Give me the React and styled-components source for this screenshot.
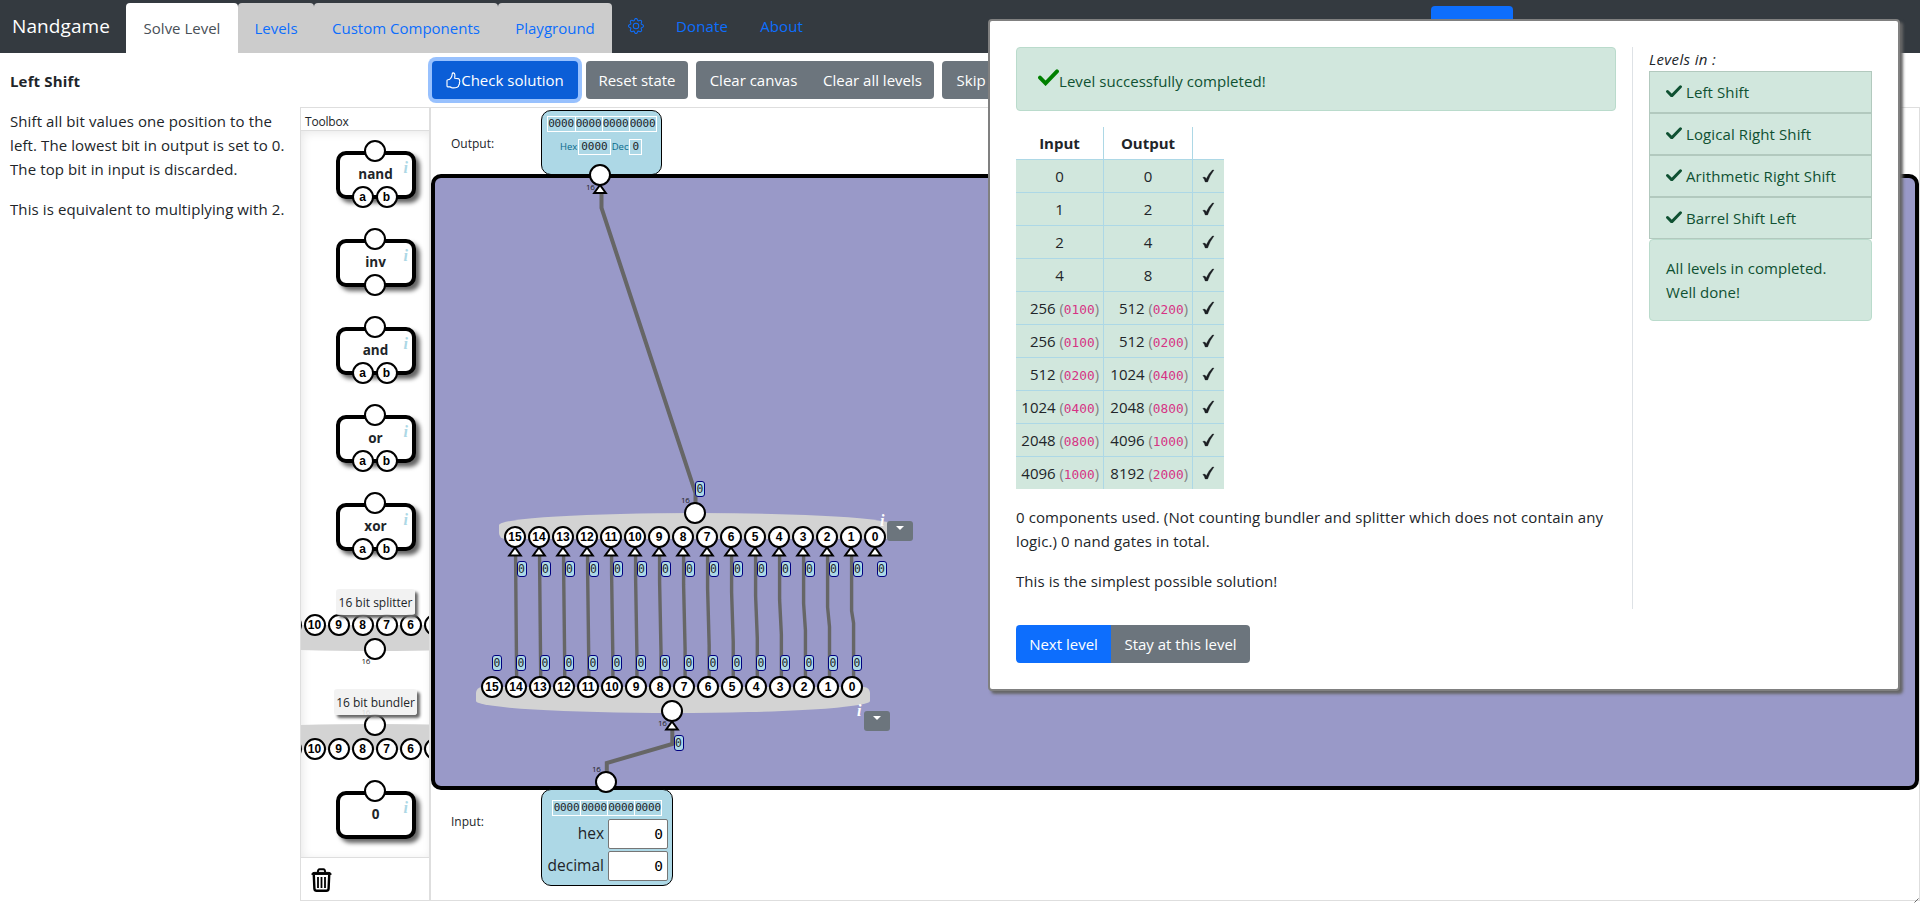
import React from "react";
import styled, { createGlobalStyle, css } from "styled-components";
import { BsGear } from "react-icons/bs";

const Global = createGlobalStyle`
  *, *::before, *::after { box-sizing: border-box; }
  body {
    margin: 0;
    background: #fff;
    color: #212529;
    font-family: "Open Sans", "Noto Sans", sans-serif;
    font-size: 15px;
    line-height: 24px;
    overflow: hidden;
  }
  p { margin: 0 0 16px; }
`;

const mono = css`font-family: "DejaVu Sans Mono", monospace;`;

const Page = styled.div`
  position: relative;
  display: flex;
  flex-direction: column;
  width: 1920px;
  height: 903px;
  overflow: hidden;
  white-space: nowrap;
`;

/* ---------- header ---------- */
const Header = styled.header`
  display: flex;
  align-items: flex-end;
  height: 53px;
  background: #343a40;
`;
const Brand = styled.div`
  width: 126px;
  height: 53px;
  padding-left: 12px;
  color: #fff;
  font-size: 19px;
  line-height: 52px;
  letter-spacing: 0.1px;
`;
const Tab = styled.a`
  width: ${(p) => p.$w}px;
  height: 50px;
  text-align: center;
  line-height: 51px;
  border-radius: 4px 4px 0 0;
  color: ${(p) => (p.$active ? "#495057" : "#0d6efd")};
  background: ${(p) => (p.$active ? "#fff" : "#ccc")};
`;
const NavLink = styled.a`
  display: flex;
  align-items: center;
  height: 53px;
  padding-bottom: 2px;
  margin-left: ${(p) => p.$gap}px;
  color: #0d6efd;
  letter-spacing: 0.15px;
  svg { display: block; }
`;
const HiddenNavButton = styled.span`
  width: 82px;
  height: 38px;
  margin: 0 407px 9px auto;
  border-radius: 4px;
  background: #0d6efd;
`;

/* ---------- body ---------- */
const Body = styled.main`
  display: flex;
  flex: 1;
`;
const Description = styled.section`
  width: 300px;
  padding: 16px 10px 0;
  letter-spacing: 0.1px;
  p, h1 { margin: 0 0 16px; }
`;
const Title = styled.h1`
  font-size: 15px;
  font-weight: 700;
  letter-spacing: 0.15px;
`;
const Work = styled.section`
  display: flex;
  flex-direction: column;
  width: 1620px;
`;
const Toolbar = styled.div`
  display: flex;
  gap: 8px;
  height: 54px;
  padding: 8px 0 0 132px;
`;
const Group = styled.div`
  display: flex;
`;
const Button = styled.button`
  display: flex;
  align-items: center;
  justify-content: center;
  width: ${(p) => p.$w}px;
  height: 38px;
  padding: 0;
  border: 0;
  border-radius: ${(p) => p.$r || "4px"};
  background: ${(p) => p.$bg || "#6c757d"};
  box-shadow: ${(p) => (p.$focus ? "0 0 0 4px rgba(49,132,253,.5)" : "none")};
  color: #fff;
  font: inherit;
`;
const Columns = styled.div`
  display: flex;
  height: 794px;
`;

/* ---------- toolbox ---------- */
const Toolbox = styled.aside`
  display: flex;
  flex-direction: column;
  width: 130px;
  border: 1px solid #dedede;
`;
const ToolboxHead = styled.div`
  height: 23px;
  padding: 2px 0 0 4px;
  border-bottom: 1px solid #dedede;
  font-size: 12px;
  line-height: 24px;
  letter-spacing: -0.2px;
`;
const ToolList = styled.div`
  display: flex;
  flex-direction: column;
  align-items: center;
  height: 726px;
  padding: 20px 0 0 21px;
  overflow: hidden;
  box-shadow: inset 2px 2px 10px #e9e9e9;
`;
const Trash = styled.div`
  height: 43px;
  padding: 10px 0 0 10px;
  border-top: 1px solid #dedede;
`;
const Gate = styled.div`
  position: relative;
  flex: none;
  width: 80px;
  height: 48px;
  margin-bottom: 40px;
  border: 4px solid #000;
  border-radius: 10px;
  background: #fff;
  box-shadow: 4px 4px 4px #666;
  text-align: center;
  font-size: 13.5px;
  font-weight: 700;
  line-height: 38px;
`;
const Info = styled.span`
  position: absolute;
  left: ${(p) => p.$x}px;
  top: ${(p) => p.$y}px;
  color: ${(p) => p.$c || "lightblue"};
  font: italic 700 16px/16px "Liberation Serif", serif;
`;
const Pin = styled.span`
  position: absolute;
  left: ${(p) => p.$x - 11}px;
  top: ${(p) => p.$y - 11}px;
  width: 22px;
  height: 22px;
  border: 2px solid #000;
  border-radius: 50%;
  background: #fff;
  color: #000;
  font: 700 12px/18px "Liberation Sans", sans-serif;
  text-align: center;
  display: flex;
  justify-content: center;
`;
const BusTool = styled.div`
  position: relative;
  flex: none;
  width: 0;
  height: ${(p) => p.$h}px;
`;
const BusLabel = styled.div`
  position: absolute;
  left: ${(p) => -p.$w / 2}px;
  top: ${(p) => p.$y}px;
  width: ${(p) => p.$w}px;
  height: 26px;
  border-radius: 3px;
  background: rgba(240, 240, 240, 0.88);
  box-shadow: 3px 3px 3px #666;
  font-size: 12px;
  line-height: 27px;
  text-align: center;
`;
const BusBody = styled.div`
  position: absolute;
  left: ${(p) => p.$x}px;
  top: ${(p) => p.$y}px;
  width: 394px;
  height: 26px;
  background: lightgray;
  border-radius: ${(p) => (p.$up ? "50% 50% 6px 6px / 12px 12px 6px 6px" : "6px 6px 50% 50% / 6px 6px 12px 12px")};
`;
const Width16 = styled.span`
  position: absolute;
  left: ${(p) => p.$x}px;
  top: ${(p) => p.$y}px;
  font-size: 8px;
  line-height: 10px;
  letter-spacing: -0.4px;
  color: #222;
`;

/* ---------- workspace ---------- */
const Panel = styled.div`
  position: relative;
  display: flex;
  flex-direction: column;
  width: 1490px;
  border: 1px solid #dedede;
`;
const Row = styled.div`
  display: flex;
  height: ${(p) => p.$h}px;
  padding-left: 20px;
`;
const RowLabel = styled.div`
  width: 90px;
  padding-top: ${(p) => p.$t}px;
  font-size: 12px;
`;
const Canvas = styled.div`
  height: 616px;
  border: 4px solid #000;
  border-radius: 10px;
  background: #9999c8;
`;
const Port = styled.div`
  display: flex;
  flex-direction: column;
  align-items: center;
  width: ${(p) => p.$w}px;
  height: ${(p) => p.$h}px;
  margin-top: ${(p) => p.$t}px;
  padding-top: ${(p) => p.$pt}px;
  border: 1px solid #000;
  border-radius: 10px;
  background: lightblue;
`;
const Bits = styled.div`
  display: flex;
  height: 16px;
  border: 1px solid #fff;
  span {
    display: flex;
    justify-content: center;
    width: 27px;
    ${mono}
    font-size: 11px;
    line-height: 14px;
    letter-spacing: -0.2px;
  }
  span + span { border-left: 1px solid #fff; }
`;
const Readout = styled.div`
  display: flex;
  align-items: center;
  height: 16px;
  margin-top: 7px;
  color: #0a6a8c;
  font-size: 9.5px;
  line-height: 16px;
  b {
    height: 16px;
    margin: 0 1px;
    padding: 0 2px;
    border: 1px solid #fff;
    color: #212529;
    ${mono}
    font-weight: 400;
    font-size: 11px;
    line-height: 14px;
  }
`;
const Field = styled.label`
  display: flex;
  align-items: center;
  justify-content: flex-end;
  align-self: stretch;
  height: 30px;
  margin: ${(p) => p.$t}px 4px 0 0;
  span { margin: -2px 4px 0 0; font-size: 15.5px; }
`;
const Input = styled.div`
  width: 60px;
  height: 30px;
  padding: 0 4px;
  border: 1px solid #767676;
  border-radius: 2px;
  background: #fff;
  color: #000;
  text-align: right;
  ${mono}
  font-size: 14.5px;
  line-height: 29px;
`;
const Circuit = styled.div`
  position: absolute;
  left: -431px;
  top: -108px;
  width: 1920px;
  height: 903px;
  > svg { position: absolute; left: 0; top: 0; }
`;
const Value = styled.span`
  position: absolute;
  left: ${(p) => p.$x - 5}px;
  top: ${(p) => p.$y - 8}px;
  display: flex;
  justify-content: center;
  width: 10px;
  height: 16px;
  border: 1px solid navy;
  border-radius: 3px;
  background: lightblue;
  ${mono}
  font-size: 11.4px;
  line-height: 14px;
`;
const Menu = styled.span`
  position: absolute;
  left: ${(p) => p.$x}px;
  top: ${(p) => p.$y}px;
  width: 26px;
  height: 20px;
  border-radius: 3px;
  background: #6c757d;
  &::after {
    content: "";
    display: block;
    width: 0;
    margin: 5px auto 0;
    border: 4px solid transparent;
    border-top-color: #fff;
    border-bottom: 0;
  }
`;
const Grip = styled.svg`
  position: absolute;
  right: 0;
  bottom: 0;
`;

/* ---------- dialog ---------- */
const Dialog = styled.div`
  position: absolute;
  left: 988px;
  top: 19px;
  display: flex;
  width: 912px;
  height: 672px;
  padding: 26px;
  border: 2px solid gray;
  border-radius: 4px;
  background: #fff;
  box-shadow: 3px 3px 3px #666;
`;
const Result = styled.div`
  display: flex;
  flex-direction: column;
  width: 600px;
`;
const Alert = styled.div`
  display: flex;
  align-items: center;
  height: ${(p) => p.$h}px;
  padding: ${(p) => p.$t || 0}px ${(p) => p.$p}px 0;
  border: 1px solid #badbcc;
  border-radius: 4px;
  background: #d1e7dd;
  color: #0f5132;
  letter-spacing: 0.06px;
  svg { margin-top: -6px; }
`;
const Table = styled.div`
  width: 208px;
  margin: 16px 0;
`;
const TableRow = styled.div`
  display: grid;
  grid-template-columns: 87px 89px 32px;
  height: ${(p) => (p.$head ? 32 : 33)}px;
  border-top: ${(p) => (p.$head ? "0" : "1px solid lightblue")};
  background: ${(p) => (p.$head ? "none" : "#d1e7dd")};
  font-weight: ${(p) => (p.$head ? 700 : 400)};
`;
const Cell = styled.div`
  height: 100%;
  padding-right: ${(p) => (p.$right ? 4 : 0)}px;
  overflow: hidden;
  text-align: ${(p) => (p.$right ? "right" : "center")};
  line-height: 33px;
  & + & { border-left: 1px solid lightblue; }
  small { color: gray; font-size: 14.6px; line-height: 1; }
  code { ${mono} color: #d63384; font-size: 12.8px; line-height: 1; }
  svg { display: block; margin: 9px 0 0 9px; }
`;
const Buttons = styled.div`
  display: flex;
  margin-top: 16px;
`;
const Text = styled.p`
  letter-spacing: ${(p) => p.$ls || 0}px;
`;
const Levels = styled.div`
  width: 240px;
  height: 562px;
  margin-left: 16px;
  padding-left: 16px;
  border-left: 1px solid #dee2e6;
`;
const LevelsTitle = styled.div`
  height: 24px;
  font-style: italic;
  line-height: 25px;
  letter-spacing: 0.35px;
`;
const Level = styled.div`
  display: flex;
  align-items: center;
  width: 223px;
  height: 42px;
  padding-left: 16px;
  border: 1px solid #b2c9be;
  background: #d1e7dd;
  color: #0f5132;
  letter-spacing: 0.1px;
  svg { margin: -2px 4px 0 0; }
`;

const Check = ({ w, color }) => (
  <svg width={w} height={w * 0.8} viewBox="0 0 20 16">
    <path d="M1.9 8.2 L7.2 13.6 L18.1 2.2" fill="none" stroke={color} strokeWidth="3.7" strokeLinejoin="miter" strokeLinecap="round" />
  </svg>
);
const Tick = () => (
  <svg width="13" height="14" viewBox="0 0 13 14">
    <path d="M0.8 8.4 Q3.2 7 4.3 9.8 Q6.8 4.4 10.4 1 L12 1 Q7.9 6.4 5.6 13 L3.2 13 Q2.4 9.6 0.8 8.4 Z" fill="#1b1f23" stroke="#1b1f23" strokeWidth="0.3" />
  </svg>
);
const Thumb = () => (
  <svg width="15" height="17" viewBox="0 0 15 17" fill="none" stroke="#fff" strokeWidth="1.15" strokeLinejoin="round">
    <path d="M6.2 1.8 Q6.4 0.8 7.4 0.9 Q8.8 1.2 8.9 3 L8.7 6.3 L12.2 6.6 Q13.6 6.9 13.5 8.2 Q14.2 9.4 13.4 10.6 Q13.8 12 12.8 13 Q12.8 14.6 11.2 15.2 Q8.2 16.4 5.6 15.6 L4 14.9 H1.8 Q1 14.8 1 14 V8.6 Q1 7.8 1.8 7.7 L3.6 7.4 Q5.6 5.6 6 3.6 Z" />
  </svg>
);
const TrashIcon = () => (
  <svg width="21" height="24" viewBox="0 0 21 24" fill="none" stroke="#000">
    <path d="M6.8 4.2 Q7 1.2 8.6 1.2 H12.4 Q14 1.2 14.2 4.2" strokeWidth="2" />
    <path d="M0.8 6.4 Q1 4.4 3 4.4 H18 Q20 4.4 20.2 6.4 Z" fill="#000" strokeWidth="1" />
    <path d="M2.8 7 L3.4 20.6 Q3.6 22.7 5.6 22.7 H15.4 Q17.4 22.7 17.6 20.6 L18.2 7" strokeWidth="2.4" />
    <path d="M7 9 V20 M10.5 9 V20 M14 9 V20" strokeWidth="1.8" />
  </svg>
);

const GateTool = ({ name, inputs }) => (
  <Gate>
    {name}
    <Info $x={64} $y={5}>i</Info>
    <Pin $x={35} $y={-4} />
    {inputs.map((n, i) => (
      <Pin key={i} $x={35 + (i - (inputs.length - 1) / 2) * 24} $y={42}>{n}</Pin>
    ))}
  </Gate>
);

const PinRow = ({ x, y, labels }) =>
  labels.map((l, i) => (
    <Pin key={i} $x={x + i * 24} $y={y}>{l}</Pin>
  ));

const range = (n) => Array.from({ length: n }, (_, i) => i);
const allBits = range(16).map((i) => 15 - i);
const shownBits = ["", 10, 9, 8, 7, 6, ""];

const gates = [
  ["nand", ["a", "b"]],
  ["inv", [""]],
  ["and", ["a", "b"]],
  ["or", ["a", "b"]],
  ["xor", ["a", "b"]],
];

const results = [
  ["0", "", "0", ""],
  ["1", "", "2", ""],
  ["2", "", "4", ""],
  ["4", "", "8", ""],
  ["256", "0100", "512", "0200"],
  ["256", "0100", "512", "0200"],
  ["512", "0200", "1024", "0400"],
  ["1024", "0400", "2048", "0800"],
  ["2048", "0800", "4096", "1000"],
  ["4096", "1000", "8192", "2000"],
];

const levels = ["Left Shift", "Logical Right Shift", "Arithmetic Right Shift", "Barrel Shift Left"];

const Num = ({ dec, hex }) => (
  <Cell $right={!!hex}>
    {dec}
    {hex && <> <small>(<code>{hex}</code>)</small></>}
  </Cell>
);

const FourNibbles = () => (
  <Bits>
    <span>0000</span><span>0000</span><span>0000</span><span>0000</span>
  </Bits>
);

const Arrow = ({ x, y }) => (
  <path d={`M${x} ${y} L${x - 5.8} ${y + 8} H${x + 5.8} Z`} fill="#fff" stroke="#000" strokeWidth="2" />
);

export default function App() {
  return (
    <Page>
      <Global />
      <Header>
        <Brand>Nandgame</Brand>
        <Tab $w={112} $active>Solve Level</Tab>
        <Tab $w={76}>Levels</Tab>
        <Tab $w={184}>Custom Components</Tab>
        <Tab $w={114}>Playground</Tab>
        <NavLink $gap={16}><BsGear size={16} /></NavLink>
        <NavLink $gap={32}>Donate</NavLink>
        <NavLink $gap={32}>About</NavLink>
        <HiddenNavButton />
      </Header>
      <Body>
        <Description>
          <Title>Left Shift</Title>
          <p>Shift all bit values one position to the<br />left. The lowest bit in output is set to 0.<br />The top bit in input is discarded.</p>
          <p>This is equivalent to multiplying with 2.</p>
        </Description>
        <Work>
          <Toolbar>
            <Button $w={146} $bg="#0b5ed7" $focus><Thumb />Check solution</Button>
            <Button $w={102}>Reset state</Button>
            <Group>
              <Button $w={115} $r="4px 0 0 4px">Clear canvas</Button>
              <Button $w={123} $r="0 4px 4px 0">Clear all levels</Button>
            </Group>
            <Button $w={94}>Skip level</Button>
          </Toolbar>
          <Columns>
            <Toolbox>
              <ToolboxHead>Toolbox</ToolboxHead>
              <ToolList>
                {gates.map(([name, inputs]) => <GateTool key={name} name={name} inputs={inputs} />)}
                <BusTool $h={100}>
                  <BusBody $x={-197} $y={34} />
                  <PinRow x={-85} y={34} labels={shownBits} />
                  <Pin $x={-1} $y={58} />
                  <Width16 $x={-14} $y={65}>16</Width16>
                  <BusLabel $w={79} $y={-2}>16 bit splitter</BusLabel>
                </BusTool>
                <BusTool $h={100}>
                  <BusBody $up $x={-197} $y={33} />
                  <Width16 $x={-14} $y={16}>16</Width16>
                  <Pin $x={-1} $y={34} />
                  <PinRow x={-85} y={58} labels={shownBits} />
                  <BusLabel $w={83} $y={-2}>16 bit bundler</BusLabel>
                </BusTool>
                <GateTool name="0" inputs={[]} />
              </ToolList>
              <Trash><TrashIcon /></Trash>
            </Toolbox>
            <Panel>
              <Row $h={66}>
                <RowLabel $t={24}>Output:</RowLabel>
                <Port $w={121} $h={65} $t={2} $pt={5}>
                  <FourNibbles />
                  <Readout>Hex<b>0000</b>Dec<b>0</b></Readout>
                </Port>
              </Row>
              <Canvas />
              <Row $h={110}>
                <RowLabel $t={20}>Input:</RowLabel>
                <Port $w={132} $h={97} $t={-1} $pt={10}>
                  <FourNibbles />
                  <Field $t={3}><span>hex</span><Input>0</Input></Field>
                  <Field $t={2}><span>decimal</span><Input>0</Input></Field>
                </Port>
              </Row>
              <Circuit>
                <BusBody $up $x={499} $y={513} />
                <BusBody $x={476} $y={687} />
                <svg width="1920" height="903" fill="none">
                  <g stroke="#666" strokeWidth="4">
                    <path d="M601.5 190 V208 L695.5 493 V505" />
                    <path d="M672.3 728 V744 L606.8 763 V775" />
                    {range(15).map((i) => {
                      const x = 515.6 + i * 24;
                      const half = 58 - i * 3.7;
                      return (
                        <path key={i} strokeWidth="3.4" d={`M${x} 553 V${617 - half} L${x + 1 + i * 0.07} ${617 + half} V680`} />
                      );
                    })}
                  </g>
                  <Arrow x={600} y={185} />
                  <Arrow x={672} y={721.5} />
                  {range(16).map((i) => <Arrow key={i} x={515 + i * 24} y={547.5} />)}
                </svg>
                <Pin $x={600} $y={175} />
                <Pin $x={695} $y={513} />
                <PinRow x={515} y={537} labels={allBits} />
                <PinRow x={492} y={687} labels={allBits} />
                <Pin $x={672} $y={711} />
                <Pin $x={606} $y={782} />
                {range(16).map((i) => <Value key={i} $x={521.5 + i * 24} $y={569}>0</Value>)}
                {range(16).map((i) => <Value key={i} $x={497 + i * 24} $y={663}>0</Value>)}
                <Value $x={700} $y={489}>0</Value>
                <Value $x={678.5} $y={743}>0</Value>
                <Width16 $x={586} $y={182}>16</Width16>
                <Width16 $x={681} $y={495}>16</Width16>
                <Width16 $x={658} $y={718}>16</Width16>
                <Width16 $x={592} $y={764}>16</Width16>
                <Info $c="#fff" $x={880} $y={513}>i</Info>
                <Info $c="#fff" $x={857} $y={703}>i</Info>
                <Menu $x={887} $y={521} />
                <Menu $x={864} $y={711} />
              </Circuit>
            </Panel>
          </Columns>
        </Work>
      </Body>
      <Grip width="6" height="5" viewBox="0 0 6 5"><path d="M0.5 4.5 L4.5 0.5" stroke="#666" /></Grip>
      <Dialog>
        <Result>
          <Alert $h={64} $p={21} $t={3}><Check w={21} color="green" />Level successfully completed!</Alert>
          <Table>
            <TableRow $head><Cell>Input</Cell><Cell>Output</Cell><Cell /></TableRow>
            {results.map(([a, ah, b, bh], i) => (
              <TableRow key={i}>
                <Num dec={a} hex={ah} />
                <Num dec={b} hex={bh} />
                <Cell><Tick /></Cell>
              </TableRow>
            ))}
          </Table>
          <Text $ls={0.11}>0 components used. (Not counting bundler and splitter which does not contain any<br />logic.) 0 nand gates in total.</Text>
          <Text $ls={0.07}>This is the simplest possible solution!</Text>
          <Buttons>
            <Button $w={95} $bg="#0d6efd" $r="4px 0 0 4px">Next level</Button>
            <Button $w={139} $r="0 4px 4px 0">Stay at this level</Button>
          </Buttons>
        </Result>
        <Levels>
          <LevelsTitle>Levels in :</LevelsTitle>
          {levels.map((l) => <Level key={l}><Check w={16} color="#0f5132" />{l}</Level>)}
          <Alert $h={82} $p={16}>All levels in completed.<br />Well done!</Alert>
        </Levels>
      </Dialog>
    </Page>
  );
}
